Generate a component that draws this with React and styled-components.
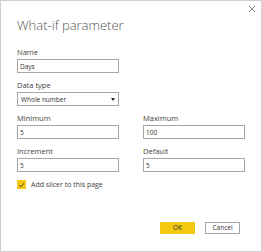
import React from 'react'
import styled, { createGlobalStyle } from 'styled-components'

const Global = createGlobalStyle`
    * { box-sizing: border-box; }
    body {
        margin: 0;
        background: #ffffff;
        font-family: "Open Sans", "Noto Sans", sans-serif;
    }
`

const Dialog = styled.div`
    position: relative;
    width: 262px;
    height: 252px;
    border: 1px solid #cfcfcf;
    background: #fff;
    padding: 15px 16px 17px 16px;
    display: flex;
    flex-direction: column;
    color: #333;
`

const Close = styled.button`
    position: absolute;
    top: 4px;
    right: 5px;
    width: 8px;
    height: 8px;
    padding: 0;
    border: none;
    background: none;
    display: flex;
    cursor: pointer;
`

const Title = styled.h1`
    margin: 0 0 13px 0;
    font-size: 13px;
    line-height: 18px;
    font-weight: 300;
    color: #555;
`

const Field = styled.div`
    display: flex;
    flex-direction: column;
    width: 102px;
    margin-bottom: 7px;
`

const Label = styled.label`
    font-size: 7.5px;
    line-height: 10px;
    margin-bottom: 2px;
    color: #444;
`

const Input = styled.input`
    height: 14px;
    width: 100%;
    border: 1px solid #a6a6a6;
    padding: 0 2px;
    font-family: inherit;
    font-size: 6.5px;
    color: #333;
    outline: none;
`

const Select = styled.div`
    height: 14px;
    width: 100%;
    border: 1px solid #a6a6a6;
    padding: 0 3px 0 3px;
    font-size: 6.5px;
    color: #333;
    display: flex;
    align-items: center;
    justify-content: space-between;
`

const Grid = styled.div`
    display: grid;
    grid-template-columns: 102px 102px;
    column-gap: 24px;
`

const CheckRow = styled.label`
    display: flex;
    align-items: center;
    gap: 5px;
    margin-top: 1px;
    font-size: 7px;
    color: #444;
`

const Box = styled.span`
    width: 9px;
    height: 9px;
    background: #f2c811;
    display: flex;
    align-items: center;
    justify-content: center;
`

const Footer = styled.div`
    margin-top: auto;
    display: flex;
    justify-content: flex-end;
    gap: 10px;
    padding-right: 5px;
`

const Button = styled.button`
    width: 35px;
    height: 12px;
    padding: 0;
    font-family: inherit;
    font-size: 6.5px;
    line-height: 10px;
    color: #333;
    background: ${({ primary }) => (primary ? '#f2c811' : '#fff')};
    border: 1px solid ${({ primary }) => (primary ? '#f2c811' : '#a6a6a6')};
    cursor: pointer;
`

export default function App() {
    return (
        <>
            <Global />
            <Dialog>
                <Close aria-label="Close">
                    <svg width="8" height="8" viewBox="0 0 8 8">
                        <path d="M1 1L7 7M7 1L1 7" stroke="#777" strokeWidth="0.9" />
                    </svg>
                </Close>
                <Title>What-if parameter</Title>
                <Field>
                    <Label>Name</Label>
                    <Input defaultValue="Days" />
                </Field>
                <Field>
                    <Label>Data type</Label>
                    <Select>
                        <span>Whole number</span>
                        <svg width="4" height="3" viewBox="0 0 4 3">
                            <path d="M0 0H4L2 3Z" fill="#222" />
                        </svg>
                    </Select>
                </Field>
                <Grid>
                    <Field>
                        <Label>Minimum</Label>
                        <Input defaultValue="5" />
                    </Field>
                    <Field>
                        <Label>Maximum</Label>
                        <Input defaultValue="100" />
                    </Field>
                    <Field>
                        <Label>Increment</Label>
                        <Input defaultValue="5" />
                    </Field>
                    <Field>
                        <Label>Default</Label>
                        <Input defaultValue="5" />
                    </Field>
                </Grid>
                <CheckRow>
                    <Box>
                        <svg width="7" height="6" viewBox="0 0 7 6">
                            <path d="M1 3L2.8 4.8L6 1.2" stroke="#333" strokeWidth="0.9" fill="none" />
                        </svg>
                    </Box>
                    Add slicer to this page
                </CheckRow>
                <Footer>
                    <Button primary>OK</Button>
                    <Button>Cancel</Button>
                </Footer>
            </Dialog>
        </>
    )
}
